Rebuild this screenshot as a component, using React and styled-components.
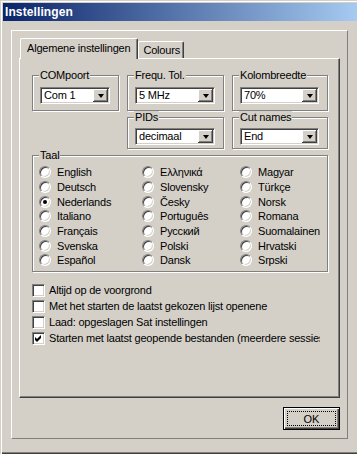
import React from 'react'
import styled, { createGlobalStyle } from 'styled-components'

const GlobalStyle = createGlobalStyle`
  html, body {
    margin: 0;
    padding: 0;
    background: #d4d0c8;
  }
  body {
    font-family: "Liberation Sans", Arial, sans-serif;
    font-size: 11px;
    letter-spacing: -0.2px;
    color: #000;
  }
  * {
    box-sizing: border-box;
  }
`

const Window = styled.div`
  width: 357px;
  height: 454px;
  padding: 3px 0 0 3px;
  background: #d4d0c8;
  overflow: hidden;
  box-shadow: inset 1px 1px 0 #d4d0c8, inset 2px 2px 0 #fff,
    inset 0 -1px 0 #404040, inset 0 -2px 0 #808080;
`

const TitleBar = styled.div`
  height: 18px;
  display: flex;
  align-items: center;
  padding-left: 2px;
  background: linear-gradient(to right, #0a246a, #a6caf0);
  color: #fff;
  font-weight: bold;
  font-size: 12px;
  letter-spacing: 0.1px;
`

const Frame = styled.div`
  width: 337px;
  height: 409px;
  margin: 9px 0 0 8px;
  padding: 7px 7px 8px 7px;
  display: flex;
  flex-direction: column;
  border-top: 1px solid #fff;
  border-left: 1px solid #fff;
  border-right: 1px solid #808080;
  border-bottom: 1px solid #808080;
`

const TabStrip = styled.div`
  height: 20px;
  display: flex;
  align-items: flex-end;
  padding-left: 1px;
`

const Tab = styled.div`
  position: relative;
  z-index: 1;
  height: ${(p) => (p.$active ? '21px' : '17px')};
  margin-bottom: ${(p) => (p.$active ? '-1px' : '0')};
  padding: ${(p) => (p.$active ? '0 7px 2px 6px' : '0 3px 0 4px')};
  display: flex;
  align-items: center;
  background: #d4d0c8;
  border-top: 1px solid #fff;
  border-left: 1px solid #fff;
  border-right: 1px solid #404040;
  border-top-left-radius: 2px;
  border-top-right-radius: 2px;
  box-shadow: inset -1px 0 0 #808080;
  white-space: nowrap;
`

const TabPanel = styled.div`
  height: 340px;
  padding: 16px 11px 0 12px;
  border-top: 1px solid #fff;
  border-left: 1px solid #fff;
  border-right: 1px solid #404040;
  border-bottom: 1px solid #404040;
  box-shadow: inset -1px -1px 0 #808080;
`

const TopGrid = styled.div`
  display: grid;
  grid-template-columns: 87px 97px 96px;
  column-gap: 8px;
  row-gap: 6px;
`

const Group = styled.div`
  grid-column: ${(p) => p.$col || 'auto'};
  display: flex;
  flex-direction: column;
  padding: 0 8px ${(p) => p.$pb}px 7px;
  border: 1px solid #808080;
  box-shadow: inset 1px 1px 0 #fff, 1px 1px 0 #fff;
`

const GroupLabel = styled.div`
  align-self: flex-start;
  margin: -7px 0 0 -1px;
  padding: 0 1px;
  line-height: 13px;
  background: #d4d0c8;
`

const Combo = styled.div`
  margin-top: ${(p) => p.$mt}px;
  height: 17px;
  display: flex;
  align-items: stretch;
  background: #fff;
  border: 1px solid;
  border-color: #808080 #fff #fff #808080;
  box-shadow: inset 1px 1px 0 #404040, inset -1px -1px 0 #d4d0c8;
  padding: 1px;
`

const ComboValue = styled.div`
  flex: 1;
  padding-left: 2px;
  line-height: 13px;
  white-space: nowrap;
  overflow: hidden;
`

const ComboButton = styled.div`
  width: 15px;
  display: flex;
  align-items: center;
  justify-content: center;
  background: #d4d0c8;
  box-shadow: inset -1px -1px 0 #404040, inset 1px 1px 0 #fff,
    inset -2px -2px 0 #808080;
`

const Arrow = styled.span`
  width: 0;
  height: 0;
  margin-top: 1px;
  border-left: 3.5px solid transparent;
  border-right: 3.5px solid transparent;
  border-top: 4px solid #000;
`

const RadioGrid = styled.div`
  margin: 3px 0 0 -1px;
  display: grid;
  grid-template-columns: 103px 98px 1fr;
  grid-template-rows: repeat(7, 14.67px);
  grid-auto-flow: column;
`

const RadioItem = styled.div`
  display: flex;
  align-items: center;
  gap: 6px;
  white-space: nowrap;
`

const RadioCircle = styled.span`
  width: 12px;
  height: 12px;
  flex: none;
  border-radius: 50%;
  background: #fff;
  border: 1px solid;
  border-color: #808080 #fff #fff #808080;
  box-shadow: inset 1px 1px 0 #404040, inset -1px -1px 0 #d4d0c8;
  display: flex;
  align-items: center;
  justify-content: center;

  &::after {
    content: '';
    width: 4px;
    height: 4px;
    border-radius: 50%;
    background: ${(p) => (p.$checked ? '#000' : 'transparent')};
  }
`

const CheckList = styled.div`
  margin-top: 12px;
  width: 288px;
  overflow: hidden;
`

const CheckRow = styled.div`
  height: 16px;
  display: flex;
  align-items: flex-start;
  gap: 4px;
  white-space: nowrap;
`

const CheckBox = styled.span`
  width: 13px;
  height: 13px;
  flex: none;
  display: flex;
  align-items: center;
  justify-content: center;
  background: #fff;
  border: 1px solid;
  border-color: #808080 #fff #fff #808080;
  box-shadow: inset 1px 1px 0 #404040, inset -1px -1px 0 #d4d0c8;
`

const CheckText = styled.span`
  line-height: 13px;
`

const Footer = styled.div`
  margin-top: 9px;
  display: flex;
  justify-content: flex-end;
`

const OkButton = styled.button`
  width: 57px;
  height: 23px;
  padding: 3px;
  font: inherit;
  color: #000;
  background: #d4d0c8;
  border: 1px solid #000;
  box-shadow: inset 1px 1px 0 #fff, inset -1px -1px 0 #404040,
    inset -2px -2px 0 #808080;
  span {
    display: flex;
    align-items: center;
    justify-content: center;
    width: 100%;
    height: 100%;
    outline: 1px dotted #000;
    outline-offset: -1px;
  }
`

const combos = [
  { label: 'COMpoort', value: 'Com 1', col: '1', mt: 5, pb: 6 },
  { label: 'Frequ. Tol.', value: '5 MHz', col: '2', mt: 5, pb: 6 },
  { label: 'Kolombreedte', value: '70%', col: '3', mt: 5, pb: 6 },
  { label: 'PIDs', value: 'decimaal', col: '2', mt: 4, pb: 3 },
  { label: 'Cut names', value: 'End', col: '3', mt: 4, pb: 3 },
]

const languages = [
  'English', 'Deutsch', 'Nederlands', 'Italiano', 'Français', 'Svenska', 'Español',
  'Ελληνικά', 'Slovensky', 'Česky', 'Português', 'Русский', 'Polski', 'Dansk',
  'Magyar', 'Türkçe', 'Norsk', 'Romana', 'Suomalainen', 'Hrvatski', 'Srpski',
]

const options = [
  { text: 'Altijd op de voorgrond', checked: false },
  { text: 'Met het starten de laatst gekozen lijst openene', checked: false },
  { text: 'Laad: opgeslagen Sat instellingen', checked: false },
  { text: 'Starten met laatst geopende bestanden (meerdere sessies)', checked: true },
]

const Check = () => (
  <svg width="7" height="7" viewBox="0 0 7 7">
    <polygon points="0,2 2,4 6,0 6,3 2,7 0,5" fill="#000" />
  </svg>
)

export default function App() {
  return (
    <Window>
      <GlobalStyle />
      <TitleBar>Instellingen</TitleBar>
      <Frame>
        <TabStrip>
          <Tab $active>Algemene instellingen</Tab>
          <Tab>Colours</Tab>
        </TabStrip>
        <TabPanel>
          <TopGrid>
            {combos.map((c) => (
              <Group key={c.label} $col={c.col} $pb={c.pb}>
                <GroupLabel>{c.label}</GroupLabel>
                <Combo $mt={c.mt}>
                  <ComboValue>{c.value}</ComboValue>
                  <ComboButton>
                    <Arrow />
                  </ComboButton>
                </Combo>
              </Group>
            ))}
            <Group $col="1 / span 3" $pb={3}>
              <GroupLabel>Taal</GroupLabel>
              <RadioGrid>
                {languages.map((l) => (
                  <RadioItem key={l}>
                    <RadioCircle $checked={l === 'Nederlands'} />
                    {l}
                  </RadioItem>
                ))}
              </RadioGrid>
            </Group>
          </TopGrid>
          <CheckList>
            {options.map((o) => (
              <CheckRow key={o.text}>
                <CheckBox>{o.checked && <Check />}</CheckBox>
                <CheckText>{o.text}</CheckText>
              </CheckRow>
            ))}
          </CheckList>
        </TabPanel>
        <Footer>
          <OkButton>
            <span>OK</span>
          </OkButton>
        </Footer>
      </Frame>
    </Window>
  )
}
